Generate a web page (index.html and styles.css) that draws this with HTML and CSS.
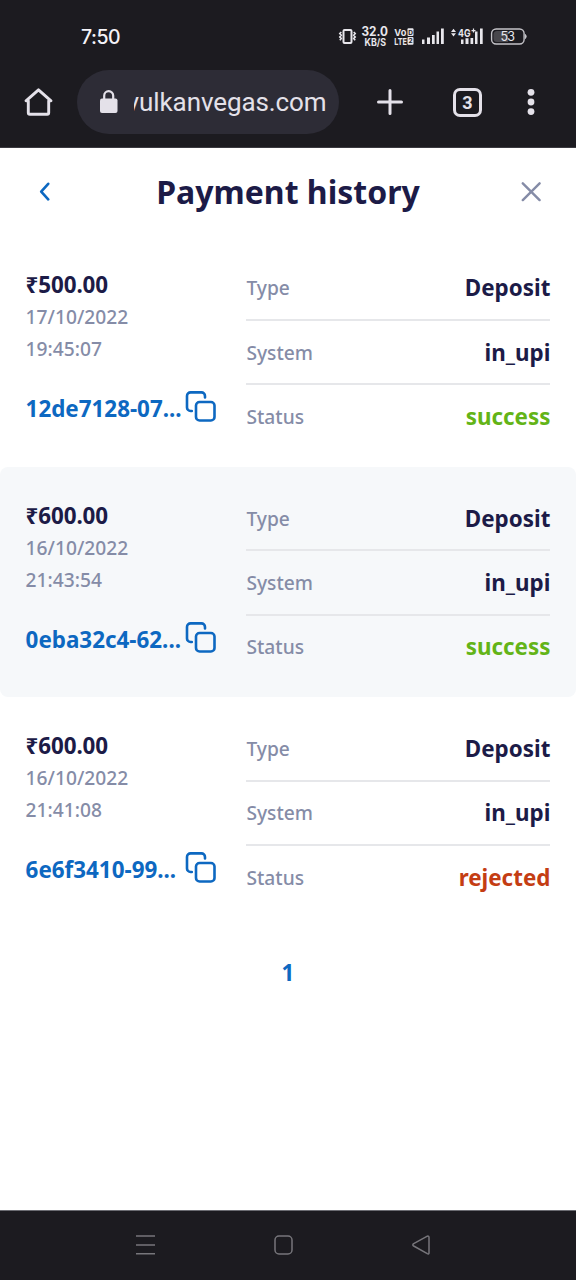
FILE: index.html
```html
<!DOCTYPE html>
<html lang="en">
<head>
<meta charset="utf-8">
<title>Payment history</title>
<link rel="stylesheet" href="styles.css">
</head>
<body>
<svg class="defs" width="0" height="0" aria-hidden="true">
  <symbol id="copy" viewBox="0 0 32 32">
    <path d="M6.8 20H5.6A3.6 3.6 0 0 1 2 16.400V5A3.600 3.600 0 0 1 5.600 1.400H16.400A3.600 3.600 0 0 1 20 5V6.400"/>
    <rect x="11" y="11" width="18.500" height="18.500" rx="3.600"/>
  </symbol>
</svg>
<div class="screen">
  <header class="chrome">
    <div class="status">
      <span class="clock">7:50</span>
      <svg class="status-icons" width="192" height="24" viewBox="338 25 192 24">
        <g fill="none" stroke="#e8e7ec">
          <rect x="343.500" y="30" width="8" height="13" rx="1" stroke-width="2"/>
          <path d="M341.300 32l-1.500 1.500 1.500 1.700-1.500 1.700 1.500 1.700-1.500 1.600M353.700 32l1.500 1.500-1.500 1.700 1.500 1.700-1.500 1.700 1.500 1.600" stroke-width="1.600"/>
          <rect x="491.600" y="29" width="32.500" height="15" rx="4.500" stroke="#c4c3c8" stroke-width="1.400"/>
        </g>
        <path d="M497 31h11v11h-11q-3.500 0-3.500-3.500v-4q0-3.500 3.500-3.500z" fill="#48474c"/>
        <path d="M525.500 34.500q1.500 1.800 0 4z" fill="#c4c3c8" stroke="#c4c3c8"/>
        <g fill="#e8e7ec" class="status-text">
          <text x="361.500" y="36.300" font-size="12.500" textLength="26.500" lengthAdjust="spacingAndGlyphs">32.0</text>
          <text x="364.500" y="46.400" font-size="10" textLength="21.500" lengthAdjust="spacingAndGlyphs">KB/S</text>
          <text x="394.300" y="36" font-size="9.500" textLength="12" lengthAdjust="spacingAndGlyphs">Vo</text>
          <text x="394.300" y="44.500" font-size="9.500" textLength="12.700" lengthAdjust="spacingAndGlyphs">LTE</text>
          <rect x="407.500" y="28.300" width="6" height="7.800" rx="1"/>
          <rect x="407.500" y="37" width="6" height="7.800" rx="1"/>
          <path d="M422 39.500h2.500v4.500h-2.500zM427 37.500h3v6.500h-3zM432 35h2.700v9h-2.700zM436.500 31.500h2.500v12.500h-2.500zM441 28.500h2.800v15.500h-2.800z"/>
          <path d="M451 32l2.500-3.300 2.500 3.300zM451 33.300l2.500 3.300 2.500-3.300z"/>
          <text x="458" y="36.500" font-size="11" textLength="12.500" lengthAdjust="spacingAndGlyphs">4G</text>
          <path d="M461 39.500h2.500v4.500h-2.500zM465.500 38.200h3v5.800h-3zM470.500 38h2.700v6h-2.700zM475 31.500h2.500v12.500h-2.500zM480 28.500h2.700v15.500h-2.700z"/>
          <path d="M471.500 30h1.400v-1.400h1.200v1.400h1.400v1.200h-1.400v1.400h-1.200v-1.400h-1.400z"/>
        </g>
        <text class="badge" x="408.300" y="34.900" font-size="6.500">D</text>
        <text class="badge" x="408.500" y="43.300" font-size="6.500">2</text>
        <text class="battery" x="500.500" y="41.300" font-size="12.500" textLength="14.500">53</text>
      </svg>
    </div>
    <div class="toolbar">
      <svg class="home" width="32" height="32" viewBox="0 0 32 32"><path d="M16.500 3.800L29 14.800h-2.300V26.800q0 1.500-1.500 1.500H7.800q-1.500 0-1.500-1.500V14.800H4z"/></svg>
      <div class="address">
        <svg width="18" height="24" viewBox="0 0 18 24"><rect x="0" y="8.500" width="17.500" height="14.500" rx="2" fill="#e4e1e9"/><path d="M4.200 9V5.700a4.500 4.500 0 0 1 9 0V9" fill="none" stroke="#e4e1e9" stroke-width="2.200"/></svg>
        <div class="url"><span>vulkanvegas.com</span></div>
      </div>
      <svg class="plus" width="26" height="26" viewBox="0 0 26 26"><path d="M13 1.500v23M1.500 13h23"/></svg>
      <span class="tabs">3</span>
      <svg class="dots" width="8" height="28" viewBox="0 0 8 28"><circle cx="4" cy="4.300" r="3.400"/><circle cx="4" cy="14" r="3.400"/><circle cx="4" cy="23.600" r="3.400"/></svg>
    </div>
  </header>

  <main class="page">
    <div class="heading">
      <svg width="12" height="20" viewBox="0 0 12 20"><path d="M9.200 1.800L2.200 9.600l7 7.800" stroke="#0d68c1" stroke-width="2.600"/></svg>
      <h1>Payment history</h1>
      <svg width="20" height="20" viewBox="0 0 20 20"><path d="M1.800 1.300l16.800 16.800M18.600 1.300L1.800 18.100" stroke="#858ca7" stroke-width="2.400"/></svg>
    </div>

    <section class="payment">
      <div class="summary">
        <strong class="amount">₹500.00</strong>
        <span class="date">17/10/2022</span>
        <span class="date">19:45:07</span>
        <div class="reference"><span>12de7128-07...</span><svg class="copy"><use href="#copy"/></svg></div>
      </div>
      <dl class="details">
        <div><dt>Type</dt><dd>Deposit</dd></div>
        <div><dt>System</dt><dd>in_upi</dd></div>
        <div><dt>Status</dt><dd class="success">success</dd></div>
      </dl>
    </section>
    <section class="payment shaded">
      <div class="summary">
        <strong class="amount">₹600.00</strong>
        <span class="date">16/10/2022</span>
        <span class="date">21:43:54</span>
        <div class="reference"><span>0eba32c4-62...</span><svg class="copy"><use href="#copy"/></svg></div>
      </div>
      <dl class="details">
        <div><dt>Type</dt><dd>Deposit</dd></div>
        <div><dt>System</dt><dd>in_upi</dd></div>
        <div><dt>Status</dt><dd class="success">success</dd></div>
      </dl>
    </section>
    <section class="payment">
      <div class="summary">
        <strong class="amount">₹600.00</strong>
        <span class="date">16/10/2022</span>
        <span class="date">21:41:08</span>
        <div class="reference"><span>6e6f3410-99...</span><svg class="copy"><use href="#copy"/></svg></div>
      </div>
      <dl class="details">
        <div><dt>Type</dt><dd>Deposit</dd></div>
        <div><dt>System</dt><dd>in_upi</dd></div>
        <div><dt>Status</dt><dd class="rejected">rejected</dd></div>
      </dl>
    </section>
    <nav class="pager">1</nav>
  </main>

  <footer class="navbar">
    <svg width="22" height="22" viewBox="0 0 22 22"><path d="M1 2h19M1 11h19M1 19.700h19"/></svg>
    <svg width="22" height="22" viewBox="0 0 22 22"><rect x="2" y="2" width="17" height="18" rx="4"/></svg>
    <svg width="22" height="22" viewBox="0 0 22 22"><path d="M2.700 9.700L16.300 2.200q1.700-.5 1.700 1.300v15.200q0 1.900-1.700 1L2.700 12q-1.700-1.100 0-2.300z"/></svg>
  </footer>
</div>
</body>
</html>
```
FILE: styles.css
```css
* { box-sizing: border-box; }
body { margin: 0; background: #fff; font-family: "Noto Sans", sans-serif; color: #1c1b47; }
.defs { position: absolute; }
svg { display: block; flex: none; }
.screen { width: 576px; height: 1280px; display: flex; flex-direction: column; overflow: hidden; }

.chrome { height: 148px; background: #1c1b20; border-bottom: 1px solid #3b3a40; font-family: Roboto, sans-serif; color: #e4e1e9; }
.status { height: 70px; padding: 25px 46px 0 81px; display: flex; justify-content: space-between; }
.clock { font: 500 19.500px/24px Inter, sans-serif; color: #f4f3f8; letter-spacing: -.5px; }
.status-text { font-family: Inter, sans-serif; font-weight: 700; }
.badge { font-family: Inter, sans-serif; font-weight: 700; fill: #1c1b20; }
.battery { font-family: Inter, sans-serif; fill: #e8e7ec; }
.toolbar { height: 64px; display: flex; align-items: center; padding-left: 22px; }
.home { fill: none; stroke: #e4e1e9; stroke-width: 2.900; stroke-linejoin: round; }
.address { width: 262px; height: 64px; margin-left: 23px; padding-left: 23px; border-radius: 32px; background: #2d2c36; display: flex; align-items: center; }
.url { width: 192.500px; margin-left: 16px; overflow: hidden; display: flex; justify-content: flex-end; font-size: 26px; line-height: 36px; letter-spacing: -.1px; white-space: nowrap; }
.plus { margin-left: 38px; fill: none; stroke: #e4e1e9; stroke-width: 3; stroke-linecap: round; }
.tabs { width: 29px; height: 29px; margin-left: 50px; border: 3px solid #e4e1e9; border-radius: 7px; font-size: 18px; font-weight: 700; line-height: 23px; text-align: center; }
.dots { margin-left: 45px; fill: #e4e1e9; }

.page { flex: 1; }
.heading { height: 88.500px; padding: 0 35px 0 39px; display: flex; justify-content: space-between; align-items: flex-start; }
.heading svg { margin-top: 33.500px; fill: none; stroke-linecap: round; stroke-linejoin: round; }
h1 { margin: 22px 0 0 4px; font-size: 32px; line-height: 44px; font-weight: 700; }
.payment { height: 230.400px; padding: 19.200px 25.600px; display: flex; justify-content: space-between; border-radius: 8px; }
.shaded { background: #f6f8fa; }
.summary { width: 191px; padding-top: 13.700px; display: flex; flex-direction: column; font-size: 22.400px; line-height: 32px; }
.amount { font-weight: 700; letter-spacing: -.1px; }
.date { font-size: 19.200px; font-weight: 500; color: #858ca7; }
.reference { margin-top: 28px; display: flex; justify-content: space-between; font-weight: 700; color: #0d68c1; white-space: nowrap; }
.copy { width: 32px; height: 32px; margin: -2px -.400px 0 0; fill: none; stroke: #0d68c1; stroke-width: 2.600; stroke-linecap: round; }
.details { width: 304px; margin: 1px 0 0; }
.details div { height: 64.300px; display: flex; justify-content: space-between; align-items: center; border-bottom: 2px solid #e6e7ea; }
.details div:last-child { height: 62.600px; border: 0; }
dt { font-size: 19.200px; font-weight: 500; color: #858ca7; }
dd { margin: 0; font-size: 22.400px; font-weight: 700; }
.success { color: #63b417; }
.rejected { color: #c43d13; }
.pager { margin-top: 29px; text-align: center; font-size: 22.400px; line-height: 32px; font-weight: 700; color: #0d68c1; }

.navbar { height: 70px; padding: 0 143px 1px 135px; display: flex; justify-content: space-between; align-items: center; background: #1c1b20; border-top: 1px solid #6b6c72; }
.navbar svg { fill: none; stroke: #77767b; stroke-width: 1.500; }
```
